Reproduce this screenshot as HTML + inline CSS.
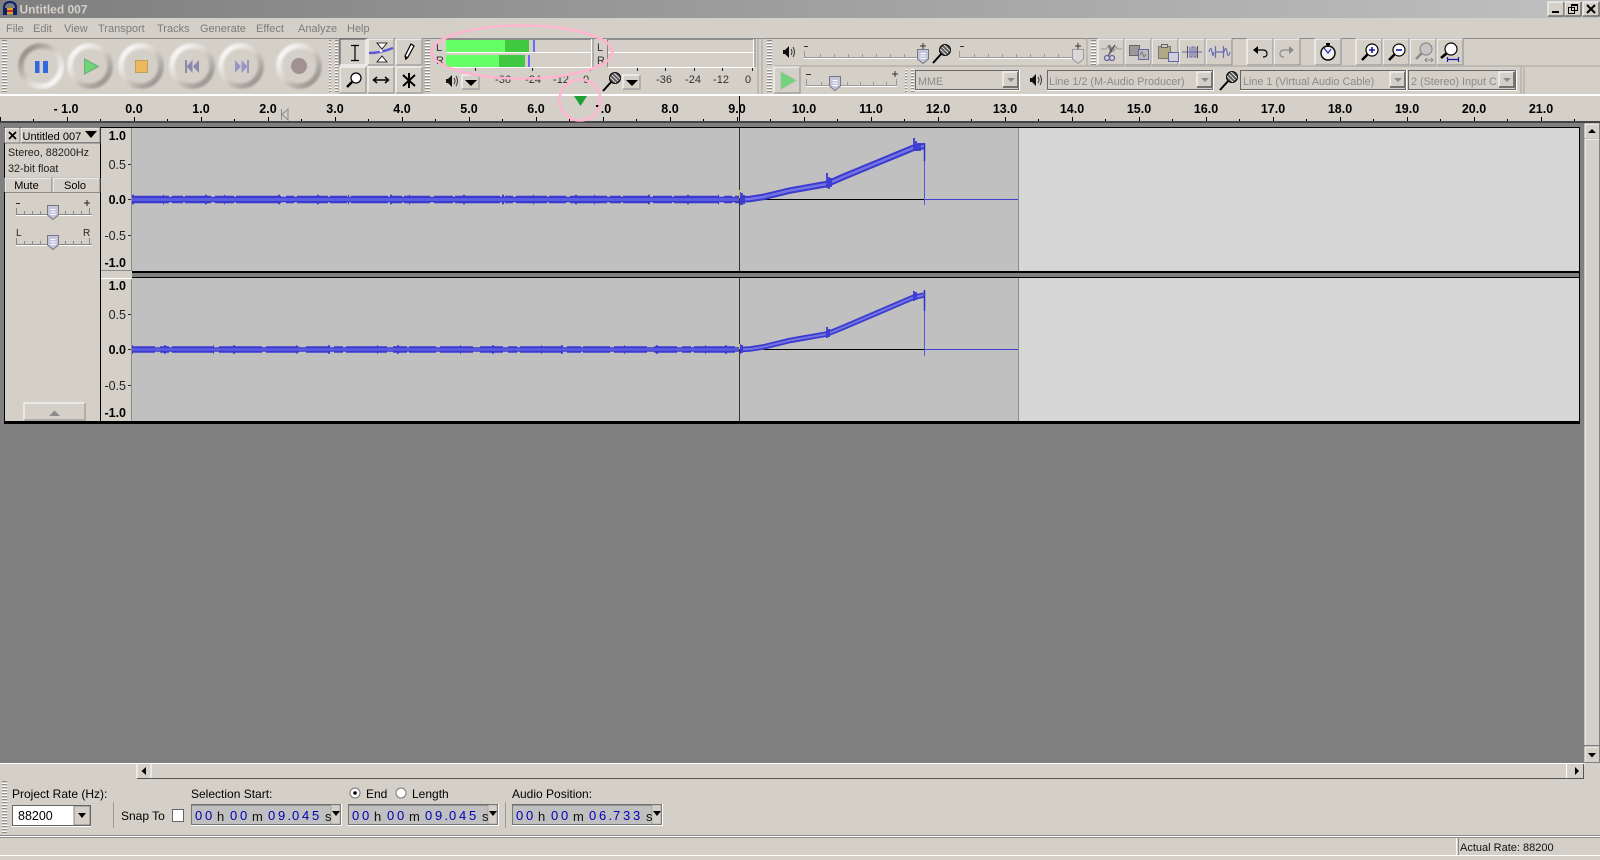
<!DOCTYPE html>
<html><head><meta charset="utf-8"><title>Untitled 007</title>
<style>
html,body{margin:0;padding:0;background:#d4d0c8;width:1600px;height:860px;overflow:hidden}
svg{display:block;position:absolute;left:0;top:0}
text{font-family:"Liberation Sans",sans-serif;font-size:11px;fill:#000;white-space:pre}
.m{fill:#7c7c7c;font-size:11px}
.r{font-weight:bold;font-size:12.5px;text-anchor:middle;fill:#000}
.vb{font-weight:bold;font-size:12.5px;text-anchor:end}
.v{font-size:12.5px;text-anchor:end;fill:#222}
.l{font-size:12px}
.d{fill:#8a8a8a;font-size:10.8px}
.n{font-size:13px;fill:#0000b8}
.u{font-size:13px;fill:#111}
.s{font-size:11px;fill:#333;text-anchor:middle}
</style></head><body>
<svg width="1600" height="860" viewBox="0 0 1600 860" xmlns="http://www.w3.org/2000/svg">
<defs>
<linearGradient id="tg"><stop offset="0" stop-color="#7e7e7e"/><stop offset="1" stop-color="#c0c0c0"/></linearGradient>
<linearGradient id="ring" x1="0" y1="0" x2="1" y2="1"><stop offset="0.1" stop-color="#fbfaf8"/><stop offset=".5" stop-color="#d4d0c8"/><stop offset="0.9" stop-color="#96928c"/></linearGradient>
<linearGradient id="ringd" x1="0" y1="0" x2="1" y2="1"><stop offset="0.1" stop-color="#8e8a84"/><stop offset=".5" stop-color="#d4d0c8"/><stop offset="0.9" stop-color="#fbfaf8"/></linearGradient>
<filter id="b" x="-20%" y="-20%" width="140%" height="140%"><feGaussianBlur stdDeviation="1.1"/></filter>
<pattern id="grip" width="9" height="3" patternUnits="userSpaceOnUse"><rect width="9" height="3" fill="#d4d0c8"/><rect x="2" y="0" width="5" height="1" fill="#fff"/><rect x="2" y="1" width="5" height="1" fill="#8c8c8c"/></pattern>
<pattern id="rt" x="0" y="0" width="67" height="6" patternUnits="userSpaceOnUse"><rect x="0" y="0" width="1" height="4" fill="#000"/><rect x="33" y="2" width="1" height="2" fill="#000"/></pattern>
<g id="btn"><rect width="27" height="27" fill="#d4d0c8"/><path d="M0 26V0H26" fill="none" stroke="#fff"/><path d="M26 0V26H0" fill="none" stroke="#8c8c8c"/></g>
<g id="ring1"><circle r="20" fill="none" stroke="url(#ring)" stroke-width="5.5" filter="url(#b)"/></g>
<g id="thumb"><path d="M-5.5 -6.5H5.5V3L0 7.5L-5.5 3Z" fill="#c4c4dc" stroke="#77777f"/><path d="M-2.5 -2.5H2.5M-2.5 0H2.5M-2.5 2.5H2.5" stroke="#fff"/></g>
<g id="thumbg"><path d="M-5.5 -6.5H5.5V3L0 7.5L-5.5 3Z" fill="#d8d8d8" stroke="#999"/></g>
<g id="mic"><path d="M-9 9L0 -1" stroke="#000" stroke-width="2"/><circle cx="3" cy="-4" r="5.5" fill="#555" stroke="#000"/><path d="M0 -7L6 -1M2 -9L8 -3M-2 -5L4 1" stroke="#ddd"/></g>
<g id="spk"><path d="M-4 -2H-2L2 -6V6L-2 2H-4Z" fill="#111"/><path d="M4 -3Q6 0 4 3M6 -5Q9 0 6 5" fill="none" stroke="#333"/></g>
<g id="dd"><rect width="18" height="15" fill="#d4d0c8"/><path d="M0 14V0H17" fill="none" stroke="#fff"/><path d="M17 0V14H0" fill="none" stroke="#8c8c8c"/><path d="M3 5H15L9 11Z" fill="#000"/></g>
<g id="ddg"><rect width="16" height="16" fill="#d4d0c8"/><path d="M0 15V0H15" fill="none" stroke="#fff"/><path d="M15 0V15H0" fill="none" stroke="#555" stroke-width="1.5"/><path d="M4 6H12L8 10Z" fill="#8a8a8a"/></g>
<g id="numbox"><rect width="151" height="22" fill="#fff"/><rect x=".5" y=".5" width="149" height="20" fill="#c0c0c0" stroke="#777"/><rect x=".5" y=".5" width="149" height="1" fill="#666"/><rect x="140" y="1" width="9" height="19" fill="#d4d0c8" stroke="#8c8c8c" stroke-width=".5"/><path d="M141 7H149L145 12Z" fill="#000"/></g>
</defs>

<rect width="1600" height="860" fill="#d4d0c8"/>
<!-- title bar -->
<rect width="1600" height="18" fill="url(#tg)"/>
<path d="M4 12V8Q4 2 10 2Q16 2 16 8V12" fill="none" stroke="#0a246a" stroke-width="2"/><rect x="3" y="8" width="4" height="7" fill="#0a246a"/><rect x="13" y="8" width="4" height="7" fill="#0a246a"/><rect x="7" y="8" width="6" height="6" fill="#e8a020"/><rect x="7" y="10" width="6" height="2" fill="#d03020"/>
<text x="19.500" y="13.500" style="font-weight:bold;font-size:12px;fill:#d4d0c8">Untitled 007</text>
<g>
<rect x="1548" y="2" width="16" height="14" fill="#d4d0c8"/><path d="M1548 16V2H1564" fill="none" stroke="#fff"/><path d="M1564 2V16H1548" fill="none" stroke="#404040"/><rect x="1552" y="11" width="7" height="2" fill="#000"/>
<rect x="1565" y="2" width="16" height="14" fill="#d4d0c8"/><path d="M1565 16V2H1581" fill="none" stroke="#fff"/><path d="M1581 2V16H1565" fill="none" stroke="#404040"/><rect x="1568.500" y="7.500" width="6" height="6" fill="none" stroke="#000"/><rect x="1571.500" y="4.500" width="6" height="6" fill="none" stroke="#000"/><rect x="1571" y="4" width="7" height="2" fill="#000"/>
<rect x="1583" y="2" width="16" height="14" fill="#d4d0c8"/><path d="M1583 16V2H1599" fill="none" stroke="#fff"/><path d="M1599 2V16H1583" fill="none" stroke="#404040"/><path d="M1587 5L1595 13M1595 5L1587 13" stroke="#000" stroke-width="2"/>
</g>
<!-- menu -->
<text class="m" x="6" y="32">File</text><text class="m" x="33" y="32">Edit</text><text class="m" x="64" y="32">View</text><text class="m" x="98" y="32">Transport</text><text class="m" x="157" y="32">Tracks</text><text class="m" x="200" y="32">Generate</text><text class="m" x="256" y="32">Effect</text><text class="m" x="298" y="32">Analyze</text><text class="m" x="347" y="32">Help</text>
<!-- toolbar frame -->
<rect x="0" y="38" width="1600" height="1" fill="#8c8c8c"/>
<rect x="0" y="94" width="1600" height="2" fill="#fff"/>
<rect x="2" y="40" width="9" height="53" fill="url(#grip)"/>
<rect x="329" y="40" width="9" height="53" fill="url(#grip)"/>
<rect x="425" y="40" width="8" height="53" fill="url(#grip)"/>
<rect x="764" y="40" width="9" height="25" fill="url(#grip)"/>
<rect x="764" y="68" width="9" height="25" fill="url(#grip)"/>
<rect x="1088" y="40" width="9" height="25" fill="url(#grip)"/>
<rect x="905" y="68" width="9" height="25" fill="url(#grip)"/>
<path d="M339 38V94M424 38V94M758 38V94M762 38V94M1087 38V66M774 66H1600" stroke="#a8a49c" fill="none"/>
<path d="M1521 67V94M1524 67V94" stroke="#a8a49c"/>
<!-- transport -->
<g><circle cx="41" cy="66" r="20" fill="none" stroke="url(#ringd)" stroke-width="5.500" filter="url(#b)"/></g>
<use href="#ring1" x="90" y="66"/><use href="#ring1" x="141" y="66"/><use href="#ring1" x="192" y="66"/><use href="#ring1" x="241" y="66"/><use href="#ring1" x="299" y="66"/>
<rect x="35" y="61" width="4.500" height="12" fill="#3068e0"/><rect x="43" y="61" width="5" height="12" fill="#3068e0"/>
<path d="M84.500 59L98.500 66.500L84.500 74Z" fill="#70d478" stroke="#6cae74"/>
<rect x="135.500" y="60.500" width="12" height="12" fill="#eeb85c" stroke="#bca060"/>
<path d="M185 60H187V73H185ZM192.500 60V73L186.500 66.500ZM199 60V73L193 66.500Z" fill="#8c88ac"/>
<path d="M247 60H249V73H247ZM241.500 60V73L247.500 66.500ZM235 60V73L241 66.500Z" fill="#9a96c4"/>
<circle cx="299" cy="66" r="8" fill="#a39092"/>
<!-- tools -->
<use href="#btn" x="340" y="39"/><use href="#btn" x="368" y="39"/><use href="#btn" x="396" y="39"/><use href="#btn" x="340" y="67"/><use href="#btn" x="368" y="67"/><use href="#btn" x="396" y="67"/>
<path d="M340 65V39H366" fill="none" stroke="#555"/><path d="M366 39V65H340" fill="none" stroke="#fff"/>
<path d="M351 45.500H359M355 45.500V60.500M351 60.500H359" stroke="#000" fill="none" stroke-width="1.200"/>
<path d="M377 43H387L382 49ZM377 62H387L382 56Z" fill="#fff" stroke="#000" stroke-width=".8"/><path d="M369 53Q380 53 393 48" fill="none" stroke="#5a5ad8" stroke-width="2.500"/><circle cx="381" cy="51" r="1.300" fill="#fff"/>
<path d="M406 59L405 56L411 44L414 46L408 57Z" fill="#fff" stroke="#000" stroke-width="1.200"/><path d="M405 56L405 60L408 57Z" fill="#000"/>
<circle cx="356" cy="78" r="5" fill="#fff" stroke="#000" stroke-width="1.200"/><path d="M352 82L347 87" stroke="#000" stroke-width="2.500"/>
<path d="M374 80H388M377 77L373.500 80L377 83M385 77L388.500 80L385 83" fill="none" stroke="#000" stroke-width="1.500"/>
<path d="M409 73V88M403 75L415 86M415 75L403 86" stroke="#000" stroke-width="2"/>
<!-- meters -->
<rect x="446" y="39" width="147" height="13" fill="#d4d0c8"/>
<path d="M446 39.500H593M608 39.500H755" stroke="#8c8c8c"/>
<path d="M446 52.500H593M446 67.500H593M608 52.500H755M608 67.500H755" stroke="#fff"/>
<path d="M591.500 39V67M753.500 39V67" stroke="#fff" stroke-width="1"/><path d="M593 39V67M755 39V67" stroke="#8c8c8c"/>
<rect x="446" y="40" width="59" height="12" fill="#66ff66"/><rect x="505" y="40" width="24" height="12" fill="#40c840"/>
<rect x="446" y="55" width="53" height="12" fill="#66ff66"/><rect x="499" y="55" width="26" height="12" fill="#40c840"/>
<rect x="533" y="40" width="2" height="12" fill="#6a6aff"/><rect x="528" y="55" width="2" height="12" fill="#6a6aff"/>
<rect x="607" y="39" width="1" height="28" fill="#a08080"/>
<text x="436" y="51" style="font-size:11px;fill:#333">L</text><text x="436" y="64" style="font-size:11px;fill:#333">R</text>
<text x="597" y="51" style="font-size:11px;fill:#333">L</text><text x="597" y="64" style="font-size:11px;fill:#333">R</text>
<path d="M475.500 68V71M532.500 68V71M590.500 68V71M637.500 68V71M665.500 68V71M694.500 68V71M722.500 68V71M752.500 68V71" stroke="#222"/>
<text class="s" x="503" y="83">-36</text><text class="s" x="533" y="83">-24</text><text class="s" x="561" y="83">-12</text><text class="s" x="586" y="83">0</text>
<text class="s" x="664" y="83">-36</text><text class="s" x="693" y="83">-24</text><text class="s" x="721" y="83">-12</text><text class="s" x="748" y="83">0</text>
<use href="#spk" x="450" y="81"/><use href="#dd" x="462" y="75"/>
<use href="#mic" x="612" y="82"/><use href="#dd" x="623" y="75"/>
<!-- mixer -->
<use href="#spk" x="787" y="52"/>
<path d="M804 57.500H918M959 57.500H1083" stroke="#999"/><path d="M804 58.500H918M959 58.500H1083" stroke="#fff"/>
<path d="M804.500 51V57M820.500 54V57M834.500 54V57M848.500 54V57M862.500 54V57M876.500 54V57M890.500 54V57M904.500 54V57M918.500 51V57M959.500 51V57M974.500 54V57M988.500 54V57M1002.500 54V57M1016.500 54V57M1030.500 54V57M1044.500 54V57M1058.500 54V57" stroke="#999"/>
<path d="M804 46.500H808M920 46H926M923 43V49M960 46.500H964M1075 46H1081M1078 43V49" stroke="#333"/>
<use href="#thumb" x="923" y="56"/><use href="#mic" x="942" y="54"/><use href="#thumbg" x="1078" y="56"/>
<!-- edit toolbar -->
<use href="#btn" x="1098" y="39"/><use href="#btn" x="1125" y="39"/><use href="#btn" x="1152" y="39"/><use href="#btn" x="1179" y="39"/><use href="#btn" x="1206" y="39"/>
<use href="#btn" x="1247" y="39"/><use href="#btn" x="1274" y="39"/><use href="#btn" x="1315" y="39"/>
<use href="#btn" x="1356" y="39"/><use href="#btn" x="1383" y="39"/><use href="#btn" x="1410" y="39"/><use href="#btn" x="1437" y="39"/>
<path d="M1101 49H1106L1108 46L1110 52L1112 47L1114 51L1116 47L1118 49H1122" fill="none" stroke="#999"/><path d="M1115 45L1108 56M1109 45L1112 52" stroke="#555" stroke-width="1.400"/><circle cx="1107" cy="58" r="2.500" fill="none" stroke="#6464aa" stroke-width="1.300"/><circle cx="1112" cy="58" r="2.500" fill="none" stroke="#6464aa" stroke-width="1.300"/>
<rect x="1129.500" y="45.500" width="10" height="10" fill="#999" stroke="#666"/><rect x="1138.500" y="49.500" width="10" height="10" fill="#bbb" stroke="#6464aa"/><path d="M1140 55L1142 52L1144 57L1146 54" fill="none" stroke="#777"/>
<rect x="1158.500" y="46.500" width="12" height="12" fill="#b0aa84" stroke="#777"/><rect x="1161.500" y="44.500" width="6" height="3" fill="#ccc" stroke="#666"/><rect x="1168.500" y="52.500" width="10" height="9" fill="#d0d0d8" stroke="#6464aa"/>
<path d="M1182 52H1202" stroke="#6868b0"/><path d="M1187.500 46V58M1197.500 46V58" stroke="#555"/><path d="M1190 47V57H1192V47H1194V57H1196V47" fill="none" stroke="#6868b0"/>
<path d="M1209 52Q1211 45 1212 52T1214 52M1215.500 46V58M1215.500 52H1223.500M1223.500 46V58M1224 52Q1226 45 1227 52T1230 52" fill="none" stroke="#6a6ab0" stroke-width="1.200"/>
<path d="M1257 50H1263Q1267 50 1267 54Q1267 57 1263 57" fill="none" stroke="#000" stroke-width="1.200"/><path d="M1253 50L1258 46V54Z" fill="#000"/>
<path d="M1294 50L1289 46V54Z" fill="#8a8a8a"/><path d="M1290 50H1284Q1280 50 1280 54Q1280 57 1284 57" fill="none" stroke="#8a8a8a" stroke-width="1.200"/>
<circle cx="1328" cy="53" r="7" fill="#f0f0f0" stroke="#000" stroke-width="1.400"/><rect x="1326" y="43" width="4" height="2" fill="#000"/><rect x="1327" y="44" width="2" height="3" fill="#000"/><path d="M1324 48L1328 53L1331 49" fill="none" stroke="#3030c0" stroke-width="1.300"/>
<circle cx="1372" cy="50" r="6" fill="#fff" stroke="#000" stroke-width="1.200"/><path d="M1368 54L1362 60" stroke="#000" stroke-width="2.500"/><path d="M1369 50H1375M1372 47V53" stroke="#1818a0" stroke-width="1.600"/>
<circle cx="1399" cy="50" r="6" fill="#fff" stroke="#000" stroke-width="1.200"/><path d="M1395 54L1389 60" stroke="#000" stroke-width="2.500"/><path d="M1396 50H1402" stroke="#1818a0" stroke-width="1.600"/>
<circle cx="1426" cy="49" r="6" fill="#c4c4c4" stroke="#8a8a8a" stroke-width="1.200"/><path d="M1422 53L1416 59" stroke="#8a8a8a" stroke-width="2.500"/><path d="M1425 60H1433M1427 58L1425 60L1427 62M1431 58L1433 60L1431 62" fill="none" stroke="#8a8a8a"/>
<circle cx="1451" cy="49" r="6" fill="#fff" stroke="#000" stroke-width="1.200"/><path d="M1447 53L1441 58" stroke="#000" stroke-width="2.500"/><path d="M1447 59.500H1459M1447.500 57V62M1458.500 57V62" stroke="#1818a0" stroke-width="1.200"/>
<!-- row 2 -->
<use href="#btn" x="774" y="67"/>
<path d="M781 72L796 80.500L781 89Z" fill="#70d478" stroke="#a0c0a0"/>
<path d="M806 85.500H897" stroke="#999"/><path d="M806 86.500H897" stroke="#fff"/>
<path d="M806.500 79V85M821.500 82V85M833.500 82V85M847.500 82V85M860.500 82V85M873.500 82V85M886.500 82V85M896.500 79V85" stroke="#999"/>
<path d="M806 74.500H811M892 74H898M895 71V77" stroke="#333"/>
<use href="#thumb" x="835" y="83"/>
<g>
<rect x="915" y="70" width="105" height="21" fill="#fff"/><rect x="915.500" y="70.500" width="103" height="19" fill="#d4d0c8" stroke="#666"/>
<rect x="1047" y="70" width="167" height="21" fill="#fff"/><rect x="1047.500" y="70.500" width="165" height="19" fill="#d4d0c8" stroke="#666"/>
<rect x="1240" y="70" width="167" height="21" fill="#fff"/><rect x="1240.500" y="70.500" width="165" height="19" fill="#d4d0c8" stroke="#666"/>
<rect x="1408" y="70" width="109" height="21" fill="#fff"/><rect x="1408.500" y="70.500" width="107" height="19" fill="#d4d0c8" stroke="#666"/>
</g>
<use href="#ddg" x="1003" y="72"/><use href="#ddg" x="1197" y="72"/><use href="#ddg" x="1390" y="72"/>
<text class="d" x="918" y="85">MME</text><text class="d" x="1049" y="85">Line 1/2 (M-Audio Producer)</text><text class="d" x="1243" y="85">Line 1 (Virtual Audio Cable)</text><text class="d" x="1411" y="85">2 (Stereo) Input C</text>
<use href="#ddg" x="1499" y="72"/>
<use href="#spk" x="1034" y="80"/><use href="#mic" x="1229" y="81"/>
<!-- ruler -->
<rect y="96" width="1600" height="26" fill="#d4d0c8"/>
<g transform="translate(134 117)"><rect x="-134" y="0" width="1600" height="4" fill="url(#rt)"/></g>
<text class="r" x="66" y="113">- 1.0</text><text class="r" x="134" y="113">0.0</text><text class="r" x="201" y="113">1.0</text><text class="r" x="268" y="113">2.0</text><text class="r" x="335" y="113">3.0</text><text class="r" x="402" y="113">4.0</text><text class="r" x="469" y="113">5.0</text><text class="r" x="536" y="113">6.0</text><text class="r" x="606" y="113">.0</text><text class="r" x="670" y="113">8.0</text><text class="r" x="737" y="113">9.0</text><text class="r" x="804" y="113">10.0</text><text class="r" x="871" y="113">11.0</text><text class="r" x="938" y="113">12.0</text><text class="r" x="1005" y="113">13.0</text><text class="r" x="1072" y="113">14.0</text><text class="r" x="1139" y="113">15.0</text><text class="r" x="1206" y="113">16.0</text><text class="r" x="1273" y="113">17.0</text><text class="r" x="1340" y="113">18.0</text><text class="r" x="1407" y="113">19.0</text><text class="r" x="1474" y="113">20.0</text><text class="r" x="1541" y="113">21.0</text>
<path d="M288 109L282 114.500L288 120ZM281.500 109V120" fill="none" stroke="#8c8c8c"/>
<rect x="596" y="105" width="4" height="2" fill="#000"/>
<rect x="739" y="96" width="1" height="25" fill="#000"/>
<rect y="121" width="1600" height="2" fill="#444"/>
<!-- main grey -->
<rect y="123" width="1600" height="640" fill="#808080"/>
<!-- tracks background -->
<rect x="4" y="127" width="1576" height="297" fill="#000"/>
<rect x="5" y="128" width="95" height="293" fill="#d4d0c8"/>
<rect x="101" y="128" width="30" height="143" fill="#d4d0c8"/><rect x="101" y="278" width="30" height="143" fill="#d4d0c8"/>
<rect x="131" y="128" width="1" height="143" fill="#8c8c8c"/><rect x="131" y="278" width="1" height="143" fill="#8c8c8c"/>
<rect x="132" y="128" width="886" height="143" fill="#c0c0c0"/><rect x="132" y="278" width="886" height="143" fill="#c0c0c0"/>
<rect x="1019" y="128" width="560" height="143" fill="#d6d6d6"/><rect x="1019" y="278" width="560" height="143" fill="#d6d6d6"/>
<rect x="1018" y="128" width="1" height="143" fill="#8c8c8c"/><rect x="1018" y="278" width="1" height="143" fill="#8c8c8c"/>
<rect x="101" y="271" width="1478" height="7" fill="#000"/><rect x="101" y="273" width="1478" height="4" fill="#808080"/>
<rect x="101" y="270" width="31" height="8" fill="#d4d0c8"/><rect x="101" y="270" width="31" height="1" fill="#8c8c8c"/><rect x="101" y="278" width="31" height="1" fill="#fff"/>
<!-- track panel -->
<path d="M5 142.500H100" stroke="#8c8c8c"/>
<rect x="5" y="128" width="15" height="15" fill="#d4d0c8"/><path d="M5 143V128H20" stroke="#fff" fill="none"/><path d="M20 128V143H5" stroke="#777" fill="none"/><path d="M9 132L16 139M16 132L9 139" stroke="#000" stroke-width="1.700"/>
<path d="M21 143V128H100" stroke="#fff" fill="none"/><path d="M100 128V143H21" stroke="#777" fill="none"/>
<text x="22.500" y="140" style="font-size:11px">Untitled 007</text>
<path d="M85 131H97L91 138Z" fill="#000"/>
<text x="8" y="156" style="font-size:10.800px;fill:#222">Stereo, 88200Hz</text><text x="8" y="172" style="font-size:10.800px;fill:#222">32-bit float</text>
<path d="M5 177.500H100M5 192.500H100" stroke="#8c8c8c"/>
<path d="M5 192V178H52" stroke="#fff" fill="none"/><path d="M53 192V178H100" stroke="#fff" fill="none"/><path d="M52 178V192M100 178V192" stroke="#777"/>
<text x="26.500" y="189" text-anchor="middle" style="font-size:11px">Mute</text><text x="75" y="189" text-anchor="middle" style="font-size:11px">Solo</text>
<path d="M16 214.500H92M16 244.500H92" stroke="#888"/><path d="M16 215.500H92M16 245.500H92" stroke="#fff"/>
<path d="M16.500 208V214M24.500 211V214M32.500 211V214M40.500 211V214M65.500 211V214M73.500 211V214M81.500 211V214M89.500 208V214M16.500 238V244M24.500 241V244M32.500 241V244M40.500 241V244M65.500 241V244M73.500 241V244M81.500 241V244M89.500 238V244" stroke="#888"/>
<path d="M16 203.500H20M84 203H90M87 200V206" stroke="#222"/>
<text x="16" y="236" style="font-size:10px;fill:#222">L</text><text x="83" y="236" style="font-size:10px;fill:#222">R</text>
<use href="#thumb" x="53" y="212"/><use href="#thumb" x="53" y="242"/>
<rect x="24" y="403" width="61" height="17" fill="#d4d0c8"/><path d="M24 420V403H85" stroke="#fff" fill="none"/><path d="M85 403V420H24" stroke="#8c8c8c" fill="none"/><path d="M49 416H60L54.500 410.500Z" fill="#8c8c8c"/>
<!-- vruler -->
<text class="vb" x="126" y="140">1.0</text><text class="v" x="126" y="169">0.5</text><text class="vb" x="126" y="204">0.0</text><text class="v" x="126" y="240">-0.5</text><text class="vb" x="126" y="267">-1.0</text>
<text class="vb" x="126" y="290">1.0</text><text class="v" x="126" y="319">0.5</text><text class="vb" x="126" y="354">0.0</text><text class="v" x="126" y="390">-0.5</text><text class="vb" x="126" y="417">-1.0</text>
<path d="M128 164.500H131M128 199.500H131M128 235.500H131M128 314.500H131M128 349.500H131M128 385.500H131" stroke="#333"/>
<!-- waves -->
<g fill="none">
<path d="M763 199.500H925M763 349.500H925" stroke="#000" stroke-width="1"/>
<path d="M925 199.500H1018M925 349.500H1018" stroke="#3f3fd0"/>
<path d="M132 199.500H739" stroke="#3a3ad0" stroke-width="5.500"/>
<path d="M132 199.500H739" stroke="#3a3ad0" stroke-width="7.500" stroke-dasharray="37 3 11 2 26 4 19 2 45 5 8 3 31 2 17 4"/>
<path d="M132 199.500H739" stroke="#3a3ad0" stroke-width="9.500" stroke-dasharray="2 29 1 41 2 17 1 53 2 37"/>
<path d="M132 349.500H739" stroke="#3a3ad0" stroke-width="4.500"/>
<path d="M132 349.500H739" stroke="#3a3ad0" stroke-width="6.500" stroke-dasharray="23 5 9 3 41 6 14 2 27 4 33 7"/>
<path d="M132 349.500H739" stroke="#3a3ad0" stroke-width="8.500" stroke-dasharray="1 31 2 47 1 19 2 61"/>
<path d="M132 199.500H739" stroke="#5c5ce0" stroke-width="3"/>
<path d="M132 349.500H739" stroke="#5c5ce0" stroke-width="2.500"/>
<path d="M739 199.500L750 199L763 197L790 190.500L827 184L843 177L913 148L924 146" stroke="#3a3ad0" stroke-width="6.500"/>
<path d="M739 199.500L750 199L763 197L790 190.500L827 184L843 177L913 148L924 146" stroke="#7474e2" stroke-width="2.500"/>
<path d="M739 349.500L750 349L763 347L790 340.500L827 334L843 327.500L913 297.500L924 295" stroke="#3a3ad0" stroke-width="5.500"/>
<path d="M739 349.500L750 349L763 347L790 340.500L827 334L843 327.500L913 297.500L924 295" stroke="#7474e2" stroke-width="2"/>
<path d="M827 173V188M829 177V189M831 178V187M914 138V150M916 141V151M918 143V151M920 143V151M740 192V205M742 193V205M744 195V204M827 327V338M829 329V337M914 291V301M916 292V300M740 344V354M742 345V353" stroke="#3a3ad0" stroke-width="1.800"/>
<path d="M924.500 143V205" stroke="#5555dd"/><path d="M924.500 143V161" stroke="#3030c8" stroke-width="1.500"/>
<path d="M924.500 290V356" stroke="#5555dd"/><path d="M924.500 290V311" stroke="#3030c8" stroke-width="1.500"/>
</g>
<rect x="739" y="128" width="1" height="143" fill="#333"/><rect x="739" y="278" width="1" height="143" fill="#333"/>
<rect x="739" y="190" width="1" height="8" fill="#c8c840"/><rect x="739" y="344" width="1" height="5" fill="#c8c840"/>
<!-- v scrollbar -->
<rect x="1585" y="124" width="14" height="14" fill="#d4d0c8"/><path d="M1585 138V124H1599" stroke="#fff" fill="none"/><path d="M1588 133H1596L1592 129Z" fill="#000"/>
<rect x="1585" y="139" width="14" height="606" fill="#d4d0c8"/><path d="M1585 745V139H1599" stroke="#fff" fill="none"/>
<rect x="1585" y="747" width="14" height="15" fill="#d4d0c8"/><path d="M1585 762V747H1599" stroke="#fff" fill="none"/><path d="M1588 753H1596L1592 757.500Z" fill="#000"/>
<!-- bottom -->
<rect y="763" width="1600" height="97" fill="#d4d0c8"/>
<rect y="763" width="1585" height="1" fill="#fff"/>
<path d="M137 778.500H1584" stroke="#555"/>
<rect x="137" y="764" width="14" height="14" fill="#d4d0c8"/><path d="M137 778V764" stroke="#fff"/><path d="M151 764V778" stroke="#fff"/><path d="M146 767V775L141.500 771Z" fill="#000"/>
<path d="M1566.500 764V778" stroke="#fff"/><path d="M1583.500 764V778" stroke="#555"/><path d="M1575 767V775L1579 771Z" fill="#000"/>
<rect x="2" y="781" width="9" height="53" fill="url(#grip)"/>
<text class="l" x="12" y="798">Project Rate (Hz):</text><text class="l" x="191" y="798">Selection Start:</text><text class="l" x="366" y="798">End</text><text class="l" x="412" y="798">Length</text><text class="l" x="512" y="798">Audio Position:</text>
<circle cx="355" cy="793" r="5" fill="#fff" stroke="#777"/><circle cx="355" cy="793" r="1.800" fill="#000"/><circle cx="401" cy="793" r="5" fill="#fff" stroke="#777"/>
<rect x="12" y="805" width="79" height="22" fill="#fff"/><rect x="12.500" y="805.500" width="78" height="20" fill="#fff" stroke="#666"/><rect x="74" y="806" width="16" height="19" fill="#d4d0c8" stroke="#666" stroke-width=".7"/><path d="M78 813H86L82 818Z" fill="#000"/>
<text x="18" y="820" style="font-size:12.500px">88200</text>
<path d="M113.500 802V828M505.500 802V828" stroke="#a09c94"/>
<text class="l" x="121" y="820">Snap To</text>
<rect x="172.500" y="809.500" width="11" height="12" fill="#fff" stroke="#666"/>
<g transform="translate(191 804)"><use href="#numbox"/><text class="n" x="4 14 39 49 77 87 96.500 101 111 121" y="16">000009.045</text><text class="u" x="26" y="17">h</text><text class="u" x="61" y="17">m</text><text class="u" x="134" y="17">s</text></g>
<g transform="translate(348 804)"><use href="#numbox"/><text class="n" x="4 14 39 49 77 87 96.500 101 111 121" y="16">000009.045</text><text class="u" x="26" y="17">h</text><text class="u" x="61" y="17">m</text><text class="u" x="134" y="17">s</text></g>
<g transform="translate(512 804)"><use href="#numbox"/><text class="n" x="4 14 39 49 77 87 96.500 101 111 121" y="16">000006.733</text><text class="u" x="26" y="17">h</text><text class="u" x="61" y="17">m</text><text class="u" x="134" y="17">s</text></g>
<rect x="0" y="835" width="1600" height="1" fill="#8c8c8c"/><rect x="0" y="836" width="1600" height="1" fill="#fff"/>
<rect x="0" y="837" width="1600" height="1" fill="#8c8c8c"/>
<rect x="0" y="855" width="1600" height="1" fill="#fff"/>
<path d="M1456.500 838V855" stroke="#fff"/><path d="M1458.500 838V855" stroke="#8c8c8c"/>
<text x="1460" y="851" style="font-size:11px;fill:#111">Actual Rate: 88200</text>
<!-- annotations -->
<ellipse cx="522" cy="52" rx="90.500" ry="26.500" fill="none" stroke="#ffb4d0" stroke-width="2.500"/>
<circle cx="580" cy="100" r="20.500" fill="none" stroke="#ffb4d0" stroke-width="2.500"/>
<path d="M574 96H587L580.500 106Z" fill="#1fa032"/>
</svg>
</body></html>
